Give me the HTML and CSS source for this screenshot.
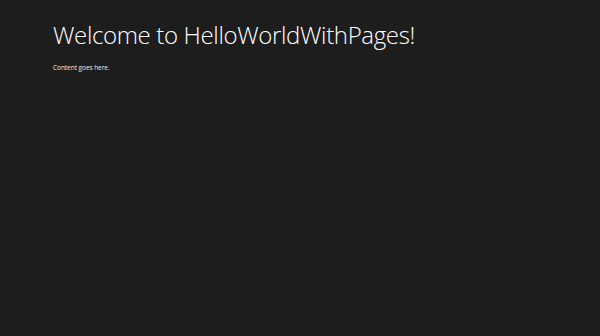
FILE: index.html
```html
<!DOCTYPE html>
<html>
<head>
<meta charset="utf-8">
<link rel="stylesheet" href="styles.css">
</head>
<body>
<div class="page">
  <h1 class="title">Welcome to HelloWorldWithPages!</h1>
  <p class="content">Content goes here.</p>
</div>
</body>
</html>
```
FILE: styles.css
```css
html, body {
  margin: 0;
  padding: 0;
  width: 600px;
  height: 336px;
  background: #1d1d1d;
  overflow: hidden;
}
.page {
  padding: 19px 0 0 53px;
  font-family: "Open Sans", "Liberation Sans", sans-serif;
  color: #ffffff;
}
.title {
  margin: 0;
  font-weight: 300;
  font-size: 24px;
  line-height: 32px;
  letter-spacing: -0.35px;
}
.content {
  margin: 12px 0 0 0;
  font-size: 6.5px;
  line-height: 10px;
  letter-spacing: -0.05px;
  color: #e8e8e8;
}
```
